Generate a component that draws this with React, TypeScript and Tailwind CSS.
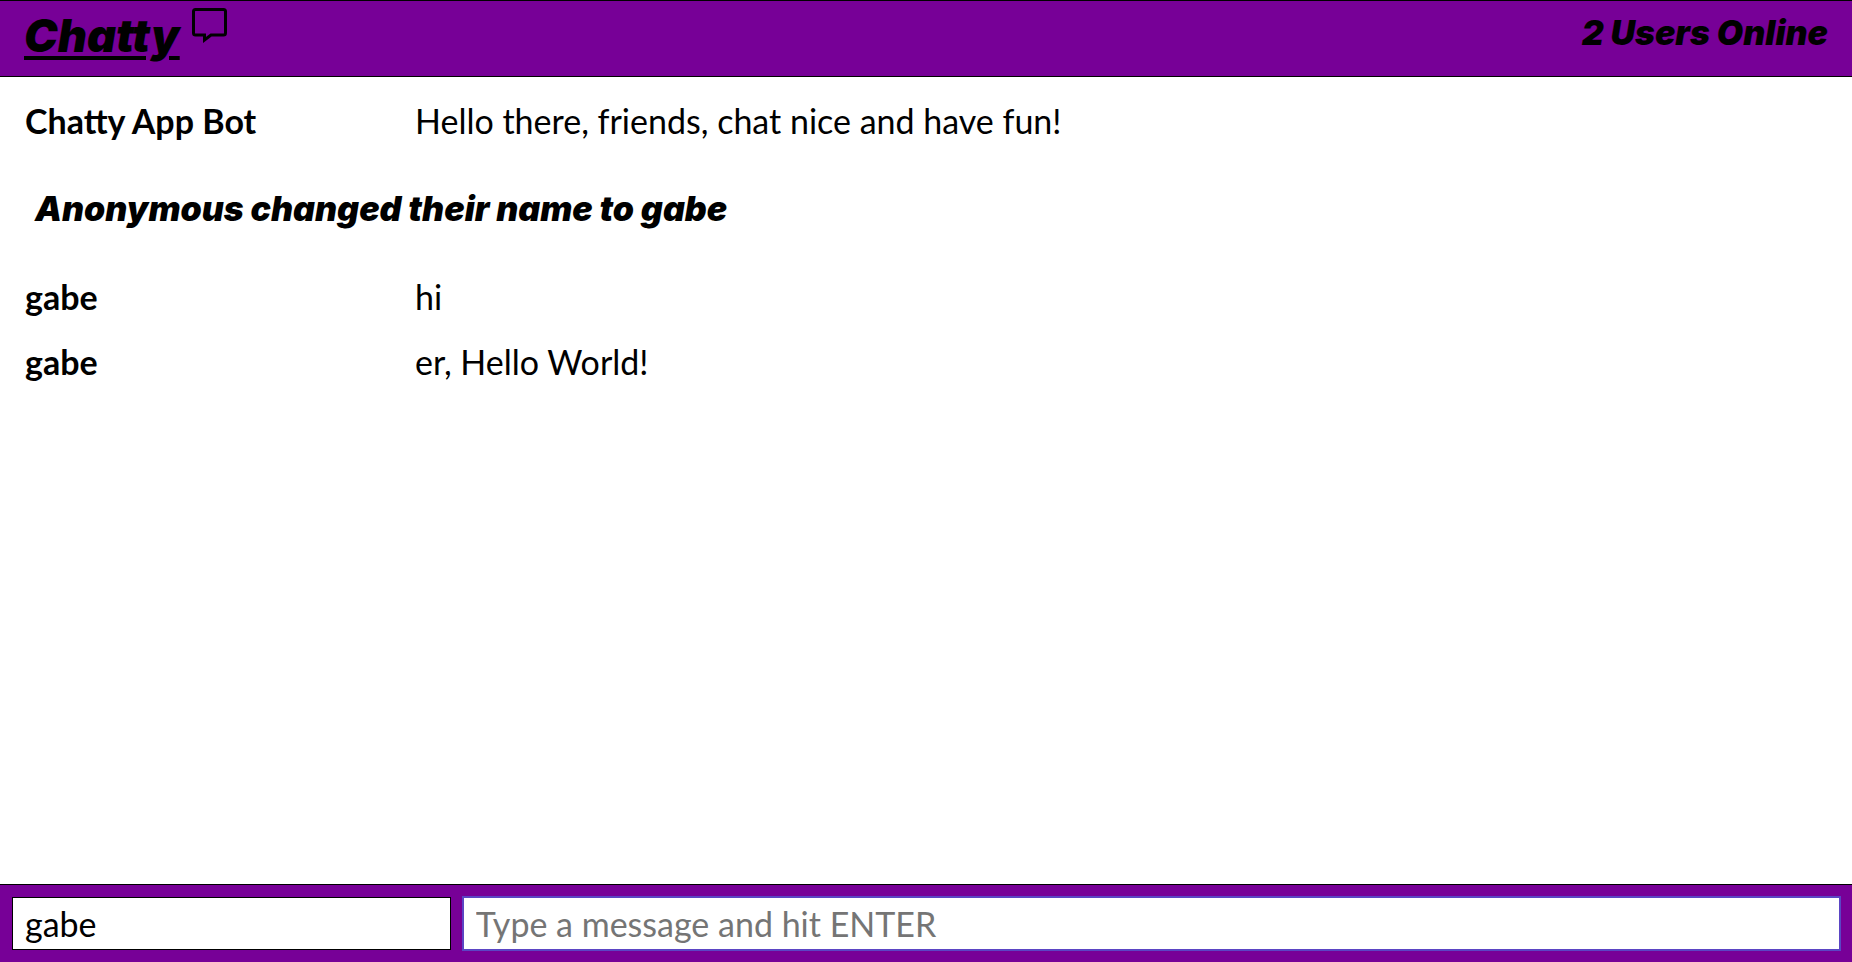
import { useState } from 'react';

type Message =
  | { id: number; kind: 'chat'; user: string; text: string }
  | { id: number; kind: 'notice'; text: string };

const initialMessages: Message[] = [
  { id: 1, kind: 'chat', user: 'Chatty App Bot', text: 'Hello there, friends, chat nice and have fun!' },
  { id: 2, kind: 'notice', text: 'Anonymous changed their name to gabe' },
  { id: 3, kind: 'chat', user: 'gabe', text: 'hi' },
  { id: 4, kind: 'chat', user: 'gabe', text: 'er, Hello World!' },
];

function SpeechBubble() {
  return (
    <svg className="h-9 w-9" viewBox="0 0 36 36" fill="none" stroke="currentColor" strokeWidth="3" aria-hidden="true">
      <path d="M3.5 2.5H31.5Q33.5 2.5 33.5 4.5V26Q33.5 28 31.5 28H19L12.5 33V28H3.5Q1.5 28 1.5 26V4.5Q1.5 2.5 3.5 2.5Z" />
    </svg>
  );
}

function NavBar() {
  return (
    <header className="flex h-[77px] shrink-0 items-start justify-between border-y border-black bg-[#770097] px-6 font-['Inter','Liberation_Sans',sans-serif] italic">
      <a href="#top" className="flex items-start gap-3 pt-1.5">
        <span className="text-[45px] leading-[58px] font-black underline decoration-4 underline-offset-4">Chatty</span>
        <SpeechBubble />
      </a>
      <p className="pt-3 text-[34px] leading-10 font-black">2 Users Online</p>
    </header>
  );
}

export default function App() {
  const [messages, setMessages] = useState<Message[]>(initialMessages);
  const [user, setUser] = useState('gabe');
  const [draft, setDraft] = useState('');

  const send = () => {
    if (!draft.trim()) return;
    setMessages([...messages, { id: messages.length + 1, kind: 'chat', user, text: draft }]);
    setDraft('');
  };

  return (
    <div id="top" className="flex h-screen flex-col bg-white font-['Lato','Liberation_Sans',sans-serif] text-[34px] leading-10 text-black">
      <NavBar />
      <main className="min-h-0 flex-1 overflow-y-auto px-[25px] pt-6">
        {messages.map((message) =>
          message.kind === 'notice' ? (
            <p key={message.id} className="my-12 px-2.5 font-['Inter','Liberation_Sans',sans-serif] font-black italic">
              {message.text}
            </p>
          ) : (
            <div key={message.id} className="mb-[25px] flex">
              <span className="w-[390px] shrink-0 font-bold">{message.user}</span>
              <span className="min-w-0 flex-1">{message.text}</span>
            </div>
          ),
        )}
      </main>
      <footer className="flex shrink-0 gap-3 border-t border-black bg-[#770097] p-3">
        <input
          aria-label="Your name"
          value={user}
          onChange={(event) => setUser(event.target.value)}
          className="h-[53px] w-[24%] border border-black bg-white px-3 outline-none"
        />
        <input
          aria-label="Message"
          placeholder="Type a message and hit ENTER"
          value={draft}
          onChange={(event) => setDraft(event.target.value)}
          onKeyDown={(event) => event.key === 'Enter' && send()}
          className="h-[53px] min-w-0 flex-1 border border-[#5b45c4] bg-white px-3 ring-1 ring-[#5b45c4] outline-none placeholder:text-[#757575]"
        />
      </footer>
    </div>
  );
}
